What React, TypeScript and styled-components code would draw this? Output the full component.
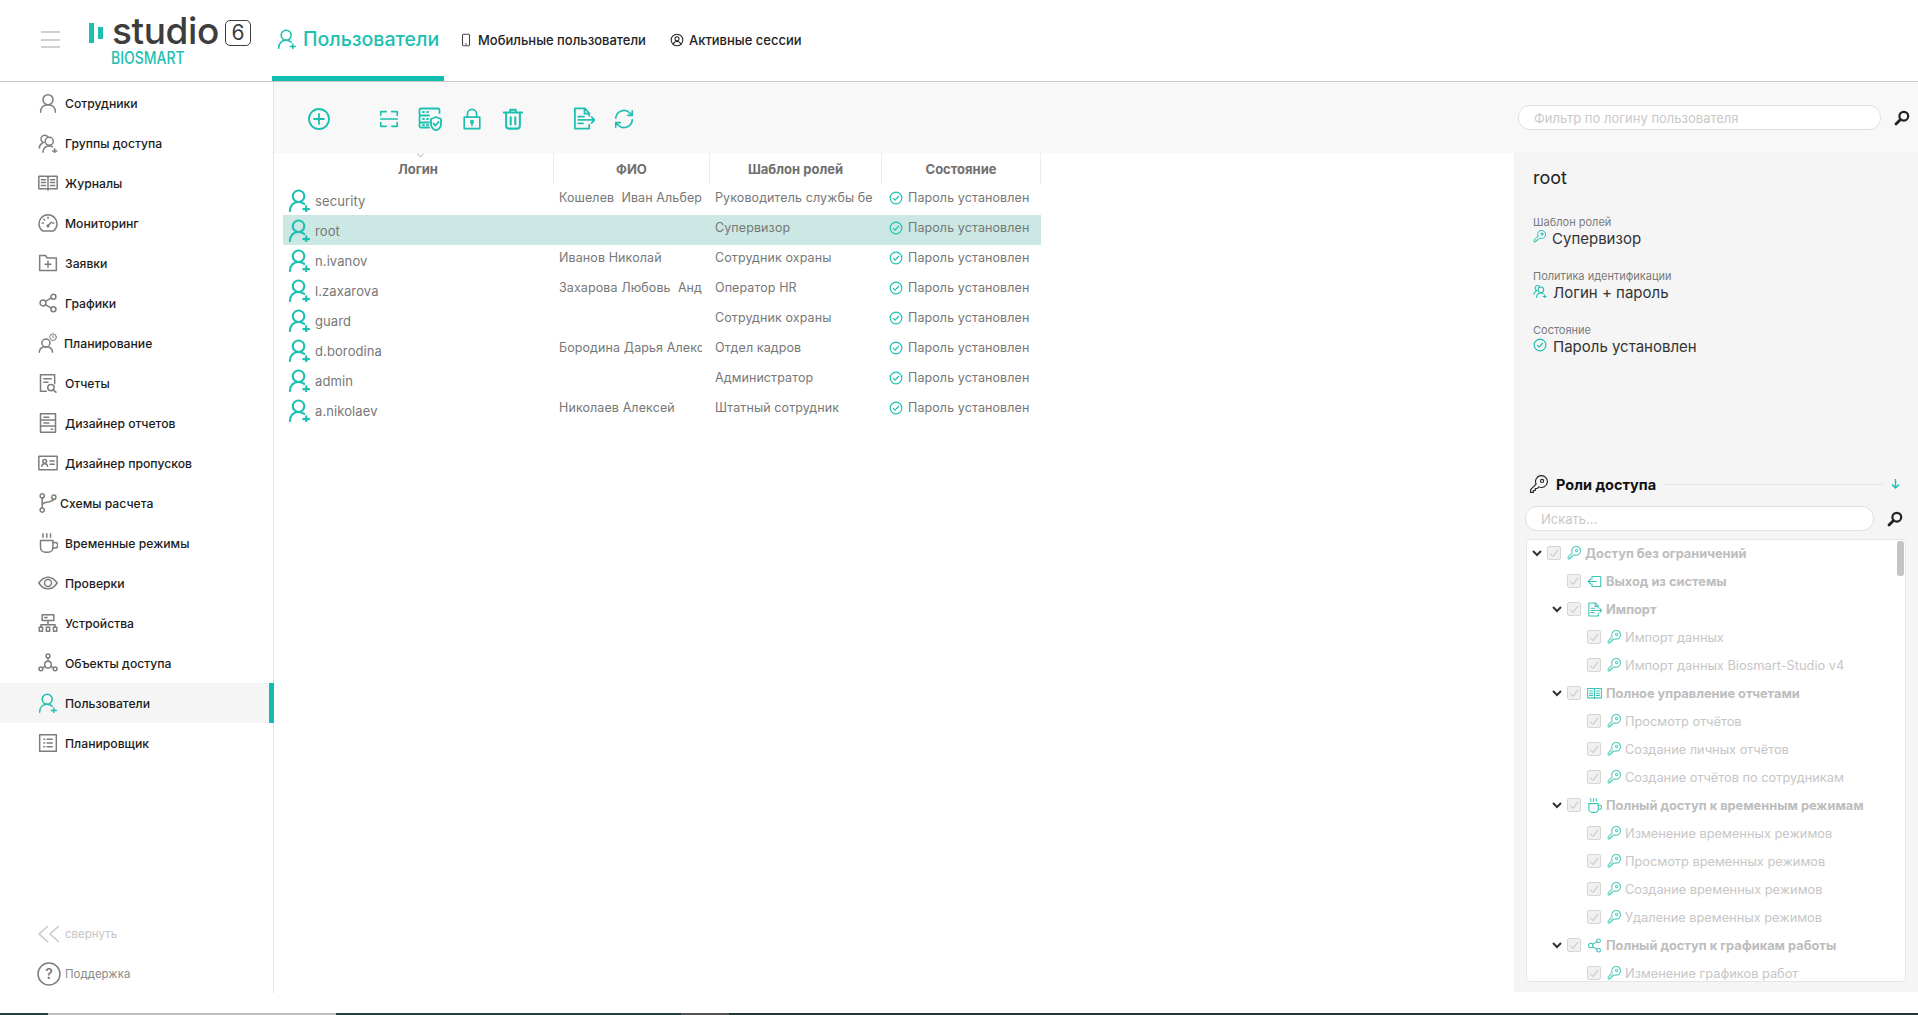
import React from 'react'
import styled, { createGlobalStyle } from 'styled-components'

const TEAL = '#1dbfb0'
const GRAY = '#7d7d7d'

const GlobalStyle = createGlobalStyle`
  html, body {
    margin: 0;
    padding: 0;
    background: #fff;
    overflow: hidden;
  }
  * { box-sizing: border-box; }
  body { font-family: Inter, "Open Sans", "Liberation Sans", sans-serif; }
`

/* ---------- icons ---------- */

type IconProps = { size?: number, color?: string, sw?: number }

const Svg: React.FC<IconProps & { children: React.ReactNode }> = ({ size = 24, color = GRAY, sw = 1.8, children }) => (
  <svg width={size} height={size} viewBox='0 0 24 24' fill='none' stroke={color} strokeWidth={sw} strokeLinecap='round' strokeLinejoin='round' style={{ flex: 'none', display: 'block' }}>
    {children}
  </svg>
)

const UserIcon: React.FC<IconProps> = p => (
  <Svg {...p}>
    <circle cx='12' cy='8' r='6' />
    <path d='M3 23c0-5.500 3.500-9 9-9s9 3.500 9 9' />
  </Svg>
)

const UserPlusIcon: React.FC<IconProps> = p => (
  <Svg {...p}>
    <circle cx='11' cy='7.500' r='6' />
    <path d='M2 23c0-5.500 3.500-9.500 9-9.500 2.500 0 4.500.8 6 2.200' />
    <path d='M19 18v6M16 21h6' />
  </Svg>
)

const GroupIcon: React.FC<IconProps> = p => (
  <Svg {...p}>
    <path d='M7 11.500a4.500 4.500 0 1 1 5-6.500' />
    <path d='M1.500 18c.3-3 1.700-5 4-6' />
    <circle cx='13.500' cy='10' r='4.800' />
    <path d='M6 23c.3-4.500 3.200-7.500 7.500-7.500 1.500 0 2.800.4 4 1.100' />
    <path d='M20 19v5M17.500 21.500h5' />
  </Svg>
)

const BookIcon: React.FC<IconProps> = p => (
  <Svg {...p}>
    <path d='M1 4h10l1 1 1-1h10v15H13l-1 1-1-1H1z' />
    <path d='M12 5v15M4 8h5M4 11.500h5M4 15h5M15 8h5M15 11.500h5M15 15h5' />
  </Svg>
)

const GaugeIcon: React.FC<IconProps> = p => (
  <Svg {...p}>
    <path d='M5.500 21.500A10.800 10.800 0 1 1 18.500 21.500z' />
    <path d='M12 15l4-4M12 5v1.500M5 12h1.500M19 12h-1.500M7 7.500l1 1' />
    <circle cx='12' cy='15.500' r='1' />
  </Svg>
)

const FolderIcon: React.FC<IconProps> = p => (
  <Svg {...p}>
    <path d='M2 3h7l2 3h11v15H2z' />
    <path d='M12 10v7M8.500 13.500h7' />
  </Svg>
)

const ShareIcon: React.FC<IconProps> = p => (
  <Svg {...p}>
    <circle cx='6' cy='12' r='3.500' />
    <circle cx='18.500' cy='4.500' r='3' />
    <circle cx='18.500' cy='19.500' r='3' />
    <path d='M9 10l7-4.200M9 14l7 4.200' />
  </Svg>
)

const PlanIcon: React.FC<IconProps> = p => (
  <Svg {...p}>
    <circle cx='9.500' cy='12' r='4.800' />
    <path d='M1.500 23c.3-4 3.500-6.500 8-6.500s7.700 2.500 8 6.500' />
    <circle cx='18' cy='5' r='4' strokeWidth='1.200' />
    <path d='M18 3v2.500' strokeWidth='1.200' />
  </Svg>
)

const ReportIcon: React.FC<IconProps> = p => (
  <Svg {...p}>
    <path d='M10 22H3V2h17v11' />
    <path d='M7 7h9M7 11h5' />
    <circle cx='15.500' cy='17.500' r='3.800' />
    <path d='M18.500 20.500l3 2.500' />
  </Svg>
)

const ReportDesignIcon: React.FC<IconProps> = p => (
  <Svg {...p}>
    <path d='M3 1h18v22H3zM3 8.500h18M3 15.500h18M7 5h6M7 12h6M16 19.500h1.500' />
  </Svg>
)

const PassIcon: React.FC<IconProps> = p => (
  <Svg {...p}>
    <path d='M1 4h22v16H1z' />
    <circle cx='8' cy='10' r='2.300' />
    <path d='M4.500 16c.3-2 1.800-3 3.500-3s3.200 1 3.500 3M14.500 9.500h5M14.500 13.500h5' />
  </Svg>
)

const BranchIcon: React.FC<IconProps> = p => (
  <Svg {...p}>
    <circle cx='5' cy='3.500' r='2.500' />
    <circle cx='5' cy='20.500' r='2.500' />
    <circle cx='19' cy='5' r='2.500' />
    <path d='M5 6v12M5 15c0-2 1-3 4-3.500 6-1 9-1.500 10-4' />
  </Svg>
)

const CupIcon: React.FC<IconProps> = p => (
  <Svg {...p}>
    <path d='M3 9h15v8c0 3.500-2.500 6-6 6H9c-3.500 0-6-2.500-6-6z' />
    <path d='M18 11.500h2.500a2 2 0 0 1 0 6.500H18' />
    <path d='M6 1v4M10.500 1v4M15 1v4' />
  </Svg>
)

const EyeIcon: React.FC<IconProps> = p => (
  <Svg {...p}>
    <path d='M1 12c3-4.500 7-7 11-7s8 2.500 11 7c-3 4.500-7 7-11 7s-8-2.500-11-7z' />
    <circle cx='12' cy='12' r='4.200' />
  </Svg>
)

const DevicesIcon: React.FC<IconProps> = p => (
  <Svg {...p}>
    <path d='M5 2h14v7H5zM8 5.500h3M12 9v5M3.500 17v-3h17v3' />
    <path d='M1.500 17h4v5h-4zM10 17h4v5h-4zM18.500 17h4v5h-4z' />
  </Svg>
)

const NodesIcon: React.FC<IconProps> = p => (
  <Svg {...p}>
    <circle cx='12' cy='3.500' r='2.300' />
    <circle cx='3.500' cy='19' r='2.300' />
    <circle cx='20.500' cy='19' r='2.300' />
    <circle cx='12' cy='14' r='4' />
    <path d='M12 6v4M5.500 17.800L8.700 16M18.500 17.800L15.300 16' />
  </Svg>
)

const ListIcon: React.FC<IconProps> = p => (
  <Svg {...p}>
    <path d='M2 2h20v20H2zM7 7.500h1M11 7.500h6M7 12h1M11 12h6M7 16.500h1M11 16.500h6' />
  </Svg>
)

const PhoneIcon: React.FC<IconProps> = p => (
  <Svg {...p}>
    <rect x='6' y='2' width='12' height='20' rx='2' />
    <path d='M11 19h2' />
  </Svg>
)

const SessionIcon: React.FC<IconProps> = p => (
  <Svg {...p}>
    <circle cx='12' cy='12' r='10' />
    <circle cx='12' cy='10' r='3.500' />
    <path d='M5.500 19c1-3 3.500-4.500 6.500-4.500s5.500 1.500 6.500 4.500' />
  </Svg>
)

const PlusCircleIcon: React.FC<IconProps> = p => (
  <Svg {...p}>
    <circle cx='12' cy='12' r='10' />
    <path d='M12 7v10M7 12h10' />
  </Svg>
)

const ScanIcon: React.FC<IconProps> = p => (
  <Svg {...p}>
    <path d='M3 8V4h6M15 4h6v4M3 16v4h6M15 20h6v-4M3 12h18' />
  </Svg>
)

const ServerShieldIcon: React.FC<IconProps> = p => (
  <Svg {...p}>
    <path d='M11 8.500H3A1.500 1.500 0 0 1 1.500 7V3A1.500 1.500 0 0 1 3 1.500h17A1.500 1.500 0 0 1 21.500 3v3M11 15.500H3A1.500 1.500 0 0 1 1.500 14v-4A1.500 1.500 0 0 1 3 8.500M3 15.500A1.500 1.500 0 0 0 1.500 17v2A1.500 1.500 0 0 0 3 20.500h8' />
    <path d='M5 5h1M9 5h1M5 12h1M9 12h1M5 18h1M9 18h1' />
    <path d='M18 10l5 2v5c0 3-2.500 5.500-5 6.500-2.500-1-5-3.500-5-6.500v-5z' />
    <path d='M15.500 16.500l2 2 3-3.500' />
  </Svg>
)

const LockIcon: React.FC<IconProps> = p => (
  <Svg {...p}>
    <path d='M3.500 10h17v12.500h-17zM7 10V6.500a5 5 0 0 1 10 0V10' />
    <circle cx='12' cy='15' r='1.400' />
    <path d='M12 16.500v2.500' />
  </Svg>
)

const TrashIcon: React.FC<IconProps> = p => (
  <Svg {...p}>
    <path d='M2 5h20M9 5V2h6v3M4.500 5v14c0 2 1.500 3.500 3.500 3.500h8c2 0 3.500-1.500 3.500-3.500V5M9.500 10v8M14.500 10v8' />
  </Svg>
)

const ExportIcon: React.FC<IconProps> = p => (
  <Svg {...p}>
    <path d='M18 9V6.500L13.500 1.500H3v21h15v-4M13 1.500V7h5M6.500 10h6M6.500 13.500h8M6.500 17h5' />
    <path d='M16 13.500h7M20.500 10.500l3 3-3 3' />
  </Svg>
)

const RefreshIcon: React.FC<IconProps> = p => (
  <Svg {...p}>
    <path d='M3 11a9 9 0 0 1 15.500-5.500L21 8M21 3v5h-5M21 13a9 9 0 0 1-15.500 5.500L3 16M3 21v-5h5' />
  </Svg>
)

const CheckCircleIcon: React.FC<IconProps> = p => (
  <Svg {...p}>
    <circle cx='12' cy='12' r='10' />
    <path d='M7.500 12.500l3 3 6-6.500' />
  </Svg>
)

const KeyIcon: React.FC<IconProps> = p => (
  <Svg {...p}>
    <path d='M9 11.500L2 18.500V22h3.500v-2.500H8V17h2.500l2-2a7.500 7.500 0 1 0-3.500-3.500z' />
    <circle cx='16.500' cy='7.500' r='2' />
  </Svg>
)

const ExitIcon: React.FC<IconProps> = p => (
  <Svg {...p}>
    <path d='M8 8V4h14v16H8v-4M15 12H2M6 8l-4 4 4 4' />
  </Svg>
)

const SearchIcon: React.FC = () => (
  <svg width={16} height={16} viewBox='0 0 16 16' fill='none' stroke='#222' strokeWidth={2.2} strokeLinecap='round' style={{ flex: 'none', display: 'block' }}>
    <circle cx='9.800' cy='6.200' r='4.400' />
    <path d='M6.500 9.500L2 14' strokeWidth={2.8} />
  </svg>
)

const ChevronIcon: React.FC = () => (
  <svg width={10} height={7} viewBox='0 0 10 7' fill='none' stroke='#333' strokeWidth={2} style={{ display: 'block' }}>
    <path d='M1 1l4 4 4-4' />
  </svg>
)

/* ---------- header ---------- */

const Page = styled.div`
  width: 1918px;
  height: 1015px;
  display: flex;
  flex-direction: column;
  background: #fff;
  overflow: hidden;
  position: relative;
`

const Header = styled.header`
  height: 82px;
  flex: none;
  display: flex;
  border-bottom: 1px solid #c8c8c8;
`

const Burger = styled.div`
  width: 19px;
  margin: 31px 0 0 41px;
  height: 17px;
  border-top: 2px solid #d0d0d0;
  border-bottom: 2px solid #d0d0d0;
  position: relative;
  &::after {
    content: '';
    position: absolute;
    left: 0;
    right: 0;
    top: 5.5px;
    height: 2px;
    background: #d0d0d0;
  }
`

const Logo = styled.div`
  width: 184px;
  margin-left: 28px;
  padding-top: 12px;
  flex: none;
`

const LogoTop = styled.div`
  display: flex;
  align-items: center;
  height: 36px;
`

const LogoBars = styled.span`
  display: flex;
  gap: 4px;
  align-items: center;
  margin: 6px 9px 0 1px;
  i {
    display: block;
    background: ${TEAL};
    width: 5px;
    height: 20px;
  }
  i + i { height: 12px; }
`

const LogoWord = styled.span`
  margin-top: 2px;
  font-size: 37px;
  line-height: 36px;
  color: #3d3d3d;
  font-weight: 500;
  letter-spacing: -.4px;
`

const LogoSix = styled.span`
  margin: 6px 0 0 6px;
  width: 26px;
  height: 26px;
  border: 1.5px solid #3d3d3d;
  border-radius: 5px;
  font-size: 21px;
  line-height: 23px;
  text-align: center;
  color: #3d3d3d;
`

const LogoSub = styled.div`
  margin: 3px 0 0 23px;
  font-size: 14px;
  line-height: 14px;
  color: ${TEAL};
  font-weight: 500;
  transform: scaleY(1.2);
`

const Tabs = styled.nav`
  display: flex;
  align-items: stretch;
`

const MainTab = styled.div`
  width: 172px;
  display: flex;
  align-items: center;
  gap: 6px;
  padding: 2px 0 0 5px;
  border-bottom: 5px solid #10bdae;
  color: ${TEAL};
  font-size: 19.5px;
  font-weight: 500;
  white-space: nowrap;
`

const SubTab = styled.div`
  display: flex;
  align-items: center;
  gap: 5px;
  margin-left: 15px;
  padding-bottom: 2px;
  margin-right: 9px;
  font-size: 13px;
  font-weight: 500;
  color: #222;
  white-space: nowrap;
`

/* ---------- body and sidebar ---------- */

const Body = styled.div`
  flex: 1;
  display: flex;
  min-height: 0;
`

const Sidebar = styled.aside`
  width: 274px;
  flex: none;
  height: 911px;
  border-right: 1px solid #e2e2e2;
  display: flex;
  flex-direction: column;
  padding-top: 1px;
`

const NavItem = styled.div<{ $active?: boolean, $gap?: number }>`
  height: 40px;
  flex: none;
  display: flex;
  align-items: center;
  gap: ${p => p.$gap ?? 7}px;
  padding-left: 38px;
  font-size: 12.2px;
  font-weight: 500;
  color: #1c1c1c;
  background: ${p => (p.$active ? '#f5f5f5' : 'transparent')};
  border-right: ${p => (p.$active ? '5px solid #10bdae' : 'none')};
  margin-right: ${p => (p.$active ? '-1px' : '0')};
`

const SideFoot = styled.div`
  margin-top: auto;
`

const FootItem = styled.div<{ $dim?: boolean }>`
  height: 40px;
  display: flex;
  align-items: center;
  gap: 4px;
  padding: 2px 0 0 37px;
  font-size: 11.5px;
  color: ${p => (p.$dim ? '#c4c4c4' : '#8a8a8a')};
`

/* ---------- main ---------- */

const Main = styled.main`
  flex: 1;
  min-width: 0;
  display: flex;
  flex-direction: column;
`

const Toolbar = styled.div`
  height: 71px;
  flex: none;
  background: #f8f8f8;
  display: flex;
  align-items: center;
  padding: 2px 8px 0 33px;
`

const ToolButton = styled.span<{ $gap?: number }>`
  margin-left: ${p => p.$gap ?? 0}px;
  display: block;
`

const PillInput = styled.div<{ $w: number }>`
  width: ${p => p.$w}px;
  height: 25px;
  flex: none;
  border: 1px solid #e0e0e0;
  border-radius: 12px;
  background: #fff;
  padding-left: 15px;
  display: flex;
  align-items: center;
  font-size: 13px;
  color: #c8c8c8;
`

const FilterWrap = styled.div`
  margin-left: auto;
  display: flex;
  align-items: center;
  gap: 13px;
  margin-top: -2px;
`

const Content = styled.div`
  flex: 1;
  min-height: 0;
  display: flex;
`

const TableArea = styled.section`
  flex: 1;
  min-width: 0;
  padding-left: 9px;
`

const TableHead = styled.div`
  width: 758px;
  height: 32px;
  display: grid;
  grid-template-columns: 271px 156px 172px 159px;
  position: relative;
`

const SortMark = styled.span`
  position: absolute;
  left: 134px;
  top: 0;
  width: 7px;
  height: 7px;
  svg { display: block; }
`

const HeadCell = styled.div`
  display: flex;
  align-items: center;
  justify-content: center;
  font-size: 13px;
  font-weight: 700;
  color: #6f6f6f;
  border-right: 1px solid #ececec;
`

const Row = styled.div<{ $selected?: boolean }>`
  width: 758px;
  height: 30px;
  display: grid;
  grid-template-columns: 271px 156px 172px 159px;
  background: ${p => (p.$selected ? '#cce8e4' : 'transparent')};
  font-size: 12.5px;
  letter-spacing: .1px;
  color: #777;
`

const LoginCell = styled.div`
  display: flex;
  align-items: center;
  gap: 4px;
  padding: 2px 0 0 5px;
  font-size: 13px;
`

const UserGlyph = styled.span`
  display: block;
  margin-top: -2px;
`

const TextCell = styled.div`
  margin: 0 8px 0 5px;
  padding-top: 1px;
  line-height: 23px;
  white-space: pre;
  overflow: hidden;
`

const StateCell = styled.div`
  display: flex;
  align-items: flex-start;
  gap: 5px;
  padding: 6px 0 0 7px;
  line-height: 13px;
  white-space: nowrap;
`

/* ---------- detail panel ---------- */

const Panel = styled.aside`
  width: 404px;
  height: 839px;
  flex: none;
  background: #f5f5f5;
  display: flex;
  flex-direction: column;
`

const Info = styled.div`
  height: 319px;
  flex: none;
  padding: 14px 0 0 19px;
`

const InfoTitle = styled.div`
  font-size: 18px;
  line-height: 22px;
  color: #222;
  margin-bottom: 27px;
`

const InfoLabel = styled.div`
  font-size: 11px;
  line-height: 12px;
  color: #7a7a7a;
`

const InfoValue = styled.div`
  display: flex;
  align-items: flex-start;
  gap: 6px;
  font-size: 15px;
  line-height: 18px;
  color: #333;
  height: 42px;
  padding-top: 2px;
`

const RolesHead = styled.div`
  display: flex;
  align-items: center;
  height: 24px;
  padding: 0 18px 0 15px;
  gap: 8px;
  font-size: 14.5px;
  font-weight: 700;
  color: #111;
`

const RolesRule = styled.span`
  flex: 1;
  height: 1px;
  background: #e2e2e2;
`

const RolesSearch = styled.div`
  display: flex;
  align-items: center;
  gap: 13px;
  margin: 10px 0 8px 11px;
`

const Tree = styled.div`
  margin-left: 12px;
  width: 380px;
  height: 443px;
  flex: none;
  background: #fff;
  border: 1px solid #e6e6e6;
  border-radius: 4px;
  overflow: hidden;
  position: relative;
  & > div:first-of-type { margin-top: -1px; }
`

const ScrollThumb = styled.span`
  position: absolute;
  right: 1px;
  top: 1px;
  width: 7px;
  height: 35px;
  border-radius: 3px;
  background: #c4c4c4;
`

const TreeRow = styled.div<{ $level: number, $bold?: boolean }>`
  height: 28px;
  flex: none;
  display: flex;
  align-items: center;
  gap: 5px;
  padding-left: ${p => 5 + p.$level * 20}px;
  font-size: 12.8px;
  font-weight: ${p => (p.$bold ? 700 : 400)};
  color: ${p => (p.$bold ? '#bdbdbd' : '#c6c6c6')};
  white-space: nowrap;
`

const Arrow = styled.span<{ $hidden?: boolean }>`
  width: 10px;
  flex: none;
  visibility: ${p => (p.$hidden ? 'hidden' : 'visible')};
`

const Box = styled.span`
  width: 14px;
  height: 14px;
  flex: none;
  margin-right: 1px;
  border: 1px solid #d6d6d6;
  border-radius: 2px;
  background: #f0f0f0;
  display: flex;
  align-items: center;
  justify-content: center;
`

const TreeGlyph = styled.span`
  display: block;
  flex: none;
  margin-right: -1px;
`

const TaskStrip = styled.div`
  position: absolute;
  left: 0;
  top: 1013px;
  width: 1918px;
  height: 2px;
  display: grid;
  grid-template-columns: 48px 288px 345px 48px 1fr;
`

const TaskSegment = styled.div<{ $color: string }>`
  background: ${p => p.$color};
`

/* ---------- data ---------- */

const navItems: { label: string, Icon: React.FC<IconProps>, active?: boolean, gap?: number }[] = [
  { label: 'Сотрудники', Icon: UserIcon },
  { label: 'Группы доступа', Icon: GroupIcon },
  { label: 'Журналы', Icon: BookIcon },
  { label: 'Мониторинг', Icon: GaugeIcon },
  { label: 'Заявки', Icon: FolderIcon },
  { label: 'Графики', Icon: ShareIcon },
  { label: 'Планирование', Icon: PlanIcon, gap: 6 },
  { label: 'Отчеты', Icon: ReportIcon },
  { label: 'Дизайнер отчетов', Icon: ReportDesignIcon },
  { label: 'Дизайнер пропусков', Icon: PassIcon },
  { label: 'Схемы расчета', Icon: BranchIcon, gap: 2 },
  { label: 'Временные режимы', Icon: CupIcon },
  { label: 'Проверки', Icon: EyeIcon },
  { label: 'Устройства', Icon: DevicesIcon },
  { label: 'Объекты доступа', Icon: NodesIcon },
  { label: 'Пользователи', Icon: UserPlusIcon, active: true },
  { label: 'Планировщик', Icon: ListIcon }
]

// the strings stop where the table cuts them off in the real screen
const users = [
  { login: 'security', name: 'Кошелев  Иван Альбер', role: 'Руководитель службы бе' },
  { login: 'root', name: '', role: 'Супервизор', selected: true },
  { login: 'n.ivanov', name: 'Иванов Николай', role: 'Сотрудник охраны' },
  { login: 'l.zaxarova', name: 'Захарова Любовь  Анд', role: 'Оператор HR' },
  { login: 'guard', name: '', role: 'Сотрудник охраны' },
  { login: 'd.borodina', name: 'Бородина Дарья Алекс', role: 'Отдел кадров' },
  { login: 'admin', name: '', role: 'Администратор' },
  { login: 'a.nikolaev', name: 'Николаев Алексей', role: 'Штатный сотрудник' }
]

const tree: { label: string, level: number, bold?: boolean, leaf?: boolean, Icon?: React.FC<IconProps> }[] = [
  { label: 'Доступ без ограничений', level: 0, bold: true },
  { label: 'Выход из системы', level: 1, bold: true, leaf: true, Icon: ExitIcon },
  { label: 'Импорт', level: 1, bold: true, Icon: ExportIcon },
  { label: 'Импорт данных', level: 2, leaf: true },
  { label: 'Импорт данных Biosmart-Studio v4', level: 2, leaf: true },
  { label: 'Полное управление отчетами', level: 1, bold: true, Icon: BookIcon },
  { label: 'Просмотр отчётов', level: 2, leaf: true },
  { label: 'Создание личных отчётов', level: 2, leaf: true },
  { label: 'Создание отчётов по сотрудникам', level: 2, leaf: true },
  { label: 'Полный доступ к временным режимам', level: 1, bold: true, Icon: CupIcon },
  { label: 'Изменение временных режимов', level: 2, leaf: true },
  { label: 'Просмотр временных режимов', level: 2, leaf: true },
  { label: 'Создание временных режимов', level: 2, leaf: true },
  { label: 'Удаление временных режимов', level: 2, leaf: true },
  { label: 'Полный доступ к графикам работы', level: 1, bold: true, Icon: ShareIcon },
  { label: 'Изменение графиков работ', level: 2, leaf: true }
]

const App: React.FC = () => (
  <Page>
    <GlobalStyle />
    <Header>
      <Burger />
      <Logo>
        <LogoTop>
          <LogoBars><i /><i /></LogoBars>
          <LogoWord>studio</LogoWord>
          <LogoSix>6</LogoSix>
        </LogoTop>
        <LogoSub>BIOSMART</LogoSub>
      </Logo>
      <Tabs>
        <MainTab><UserPlusIcon size={20} color={TEAL} sw={1.9} />Пользователи</MainTab>
        <SubTab><PhoneIcon size={14} color='#444' />Мобильные пользователи</SubTab>
        <SubTab><SessionIcon size={14} color='#222' />Активные сессии</SubTab>
      </Tabs>
    </Header>
    <Body>
      <Sidebar>
        {navItems.map(({ label, Icon, active, gap }) => (
          <NavItem key={label} $active={active} $gap={gap}>
            <Icon size={20} color={active ? TEAL : GRAY} />
            {label}
          </NavItem>
        ))}
        <SideFoot>
          <FootItem $dim>
            <svg width={24} height={18} viewBox='0 0 24 18' fill='none' stroke='#c8c8c8' strokeWidth={1.5} style={{ flex: 'none' }}>
              <path d='M11 1L2 9l9 8M22 1l-9 8 9 8' />
            </svg>
            свернуть
          </FootItem>
          <FootItem>
            <svg width={24} height={24} viewBox='0 0 24 24' fill='none' stroke={GRAY} strokeWidth={1.5} style={{ flex: 'none' }}>
              <circle cx='12' cy='12' r='11' />
              <text x='12' y='17' textAnchor='middle' fontSize='14' fontWeight='600' fill={GRAY} stroke='none'>?</text>
            </svg>
            Поддержка
          </FootItem>
        </SideFoot>
      </Sidebar>
      <Main>
        <Toolbar>
          <ToolButton><PlusCircleIcon size={24} color={TEAL} /></ToolButton>
          <ToolButton $gap={47}><ScanIcon size={22} color={TEAL} /></ToolButton>
          <ToolButton $gap={18}><ServerShieldIcon size={24} color={TEAL} /></ToolButton>
          <ToolButton $gap={19}><LockIcon size={22} color={TEAL} /></ToolButton>
          <ToolButton $gap={19}><TrashIcon size={22} color={TEAL} sw={2.2} /></ToolButton>
          <ToolButton $gap={48}><ExportIcon size={23} color={TEAL} /></ToolButton>
          <ToolButton $gap={18}><RefreshIcon size={22} color={TEAL} /></ToolButton>
          <FilterWrap>
            <PillInput $w={363}>Фильтр по логину пользователя</PillInput>
            <SearchIcon />
          </FilterWrap>
        </Toolbar>
        <Content>
          <TableArea>
            <TableHead>
              <SortMark>
                <svg width={7} height={5} viewBox='0 0 7 5' fill='none' stroke='#999' strokeWidth={.8}><path d='M.5 .5L3.500 4l3-3.500' /></svg>
              </SortMark>
              <HeadCell>Логин</HeadCell>
              <HeadCell>ФИО</HeadCell>
              <HeadCell>Шаблон ролей</HeadCell>
              <HeadCell>Состояние</HeadCell>
            </TableHead>
            {users.map(u => (
              <Row key={u.login} $selected={u.selected}>
                <LoginCell><UserGlyph><UserPlusIcon size={23} color={TEAL} sw={2.2} /></UserGlyph>{u.login}</LoginCell>
                <TextCell>{u.name}</TextCell>
                <TextCell>{u.role}</TextCell>
                <StateCell><CheckCircleIcon size={14} color={TEAL} sw={2} />Пароль установлен</StateCell>
              </Row>
            ))}
          </TableArea>
          <Panel>
            <Info>
              <InfoTitle>root</InfoTitle>
              <InfoLabel>Шаблон ролей</InfoLabel>
              <InfoValue><KeyIcon size={13} color={TEAL} />Супервизор</InfoValue>
              <InfoLabel>Политика идентификации</InfoLabel>
              <InfoValue><GroupIcon size={14} color={TEAL} />Логин + пароль</InfoValue>
              <InfoLabel>Состояние</InfoLabel>
              <InfoValue><CheckCircleIcon size={14} color={TEAL} sw={2} />Пароль установлен</InfoValue>
            </Info>
            <RolesHead>
              <KeyIcon size={19} color='#222' sw={1.4} />
              <span>Роли доступа</span>
              <RolesRule />
              <svg width={9} height={10} viewBox='0 0 9 10' fill='none' stroke={TEAL} strokeWidth={1.4} style={{ flex: 'none' }}><path d='M4.500 0v9M1 5.500l3.500 3.500L8 5.500' /></svg>
            </RolesHead>
            <RolesSearch>
              <PillInput $w={349}>Искать...</PillInput>
              <SearchIcon />
            </RolesSearch>
            <Tree>
              <ScrollThumb />
              {tree.map(item => {
                const ItemIcon = item.Icon ?? KeyIcon
                return (
                  <TreeRow key={item.label} $level={item.level} $bold={item.bold}>
                    <Arrow $hidden={item.leaf}><ChevronIcon /></Arrow>
                    <Box>
                      <svg width={10} height={9} viewBox='0 0 10 9' fill='none' stroke='#bdbdbd' strokeWidth={1}><path d='M1 4.500l3 3 5-6.500' /></svg>
                    </Box>
                    <TreeGlyph>
                      <ItemIcon size={item.Icon ? 15 : 14} color={item.Icon ? '#3cc4b7' : '#5fcfc4'} sw={item.Icon ? 1.7 : 2} />
                    </TreeGlyph>
                    {item.label}
                  </TreeRow>
                )
              })}
            </Tree>
          </Panel>
        </Content>
      </Main>
    </Body>
    <TaskStrip>
      <TaskSegment $color='#26403f' />
      <TaskSegment $color='#bdbdbd' />
      <TaskSegment $color='#26403f' />
      <TaskSegment $color='#555' />
      <TaskSegment $color='#26343c' />
    </TaskStrip>
  </Page>
)

export default App
